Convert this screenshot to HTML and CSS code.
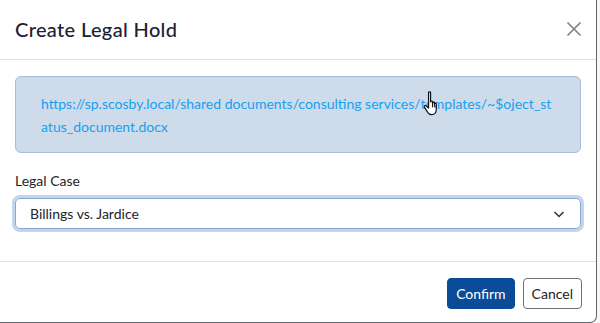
FILE: index.html
```html
<!DOCTYPE html>
<html lang="en">
<head>
    <meta charset="UTF-8">
    <meta name="viewport" content="width=device-width, initial-scale=1.0">
    <title>Create Legal Hold</title>
    <link rel="stylesheet" href="styles.css">
</head>
<body>
    <div class="modal">
        <div class="modal-header">
            <h1 class="modal-title">Create Legal Hold</h1>
            <button class="close" aria-label="Close">
                <svg width="16" height="16" viewBox="0 0 16 16">
                    <path d="M1.5 1.5 L14.5 14.5 M14.5 1.5 L1.5 14.5" stroke="#7b8088" stroke-width="1.6" fill="none"/>
                </svg>
            </button>
        </div>
        <div class="modal-body">
            <div class="alert">
                <a class="doc-link" href="#">https://sp.scosby.local/shared documents/consulting services/templates/~$oject_status_document.docx</a>
                <!-- mouse pointer over the link -->
                <svg class="cursor" width="20" height="27" viewBox="0 0 18 24">
                    <path d="M5 2.2c0-1 1.8-1 1.8 0v8.3c0-1 1.7-1 1.7 0v1c0-1 1.7-1 1.7 0v1c0-1 1.7-1 1.7 0v5.2c0 2.2-1.4 4.3-4 4.3H7.6c-1.5 0-2.4-.7-3.2-1.8L1.3 15.3c-.6-1 .6-2 1.5-1.2L5 16.2z" fill="#fff" stroke="#111" stroke-width="1.1" stroke-linejoin="round"/>
                    <path d="M8.5 11v4.5M10.2 12.3v3.2M11.9 13.3v2.2" stroke="#111" stroke-width=".9"/>
                </svg>
            </div>
            <label class="field-label">Legal Case</label>
            <div class="select">
                <span>Billings vs. Jardice</span>
                <svg width="14" height="14" viewBox="0 0 14 14">
                    <path d="M2.5 5 L7 9.5 L11.5 5" stroke="#333" stroke-width="1.5" fill="none"/>
                </svg>
            </div>
        </div>
        <div class="modal-footer">
            <button class="btn btn-primary">Confirm</button>
            <button class="btn btn-secondary">Cancel</button>
        </div>
    </div>
</body>
</html>
```

FILE: styles.css
```css
body {
    margin: 0;
    padding: 0;
    background-color: #f7f7f8;
    font-family: Lato, "Open Sans", sans-serif;
    color: #212529;
    overflow: hidden;
}

.modal {
    width: 597px;
    height: 323px;
    background-color: #fff;
    border: 1px solid #5f6670;
    border-top: none;
    border-left: none;
    border-radius: 0 0 7px 0;
    box-sizing: border-box;
    display: flex;
    flex-direction: column;
}

.modal-header {
    height: 60px;
    display: flex;
    align-items: center;
    justify-content: space-between;
    padding: 0 14px 0 15px;
    border-bottom: 1px solid #dee2e6;
    box-sizing: border-box;
}

.modal-title {
    margin: 0;
    font-size: 20px;
    font-weight: 500;
    letter-spacing: 0.35px;
    color: #1b2136;
    padding-bottom: 1px;
}

.close {
    background: none;
    border: none;
    padding: 0;
    width: 16px;
    height: 16px;
    margin-bottom: 1px;
}

.modal-body {
    padding: 16px 15px 0 15px;
    flex: 1;
}

.alert {
    position: relative;
    background-color: #cddbeb;
    border: 1px solid #a4bedc;
    border-radius: 6px;
    padding: 15px 24px 14px 25px;
    line-height: 23px;
    font-size: 14px;
}

.doc-link {
    color: #18a0ef;
    text-decoration: none;
    word-break: break-all;
}

.cursor {
    position: absolute;
    left: 407px;
    top: 13px;
}

.field-label {
    display: block;
    margin-top: 19px;
    margin-bottom: 9px;
    font-size: 14px;
    color: #212529;
}

.select {
    height: 31px;
    border: 1px solid #86a9d2;
    border-radius: 5px;
    box-shadow: 0 0 0 3px #c3d5ea;
    display: flex;
    align-items: center;
    justify-content: space-between;
    padding: 0 14px 0 14px;
    box-sizing: border-box;
    font-size: 14px;
    color: #212529;
}

.modal-footer {
    height: 61px;
    border-top: 1px solid #dee2e6;
    display: flex;
    justify-content: flex-end;
    align-items: center;
    gap: 8px;
    padding: 0 14px 0 0;
    box-sizing: border-box;
}

.btn {
    height: 31px;
    font-family: Lato, "Open Sans", sans-serif;
    font-size: 14px;
    border-radius: 4px;
    padding: 0 8px;
    margin-top: 3px;
}

.btn-primary {
    background-color: #0b4c98;
    border: 1px solid #0b4c98;
    color: #fff;
}

.btn-secondary {
    background-color: #fff;
    border: 1px solid #6c7178;
    color: #222;
}
```
